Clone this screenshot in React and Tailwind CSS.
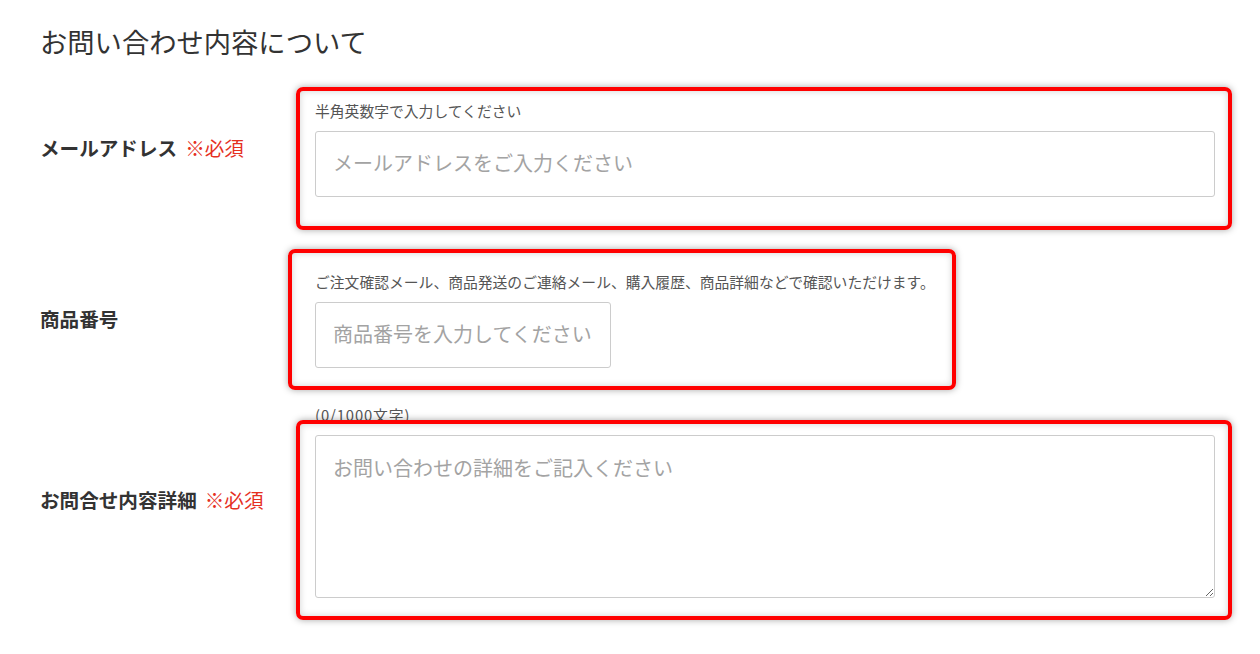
import React from 'react';

const jp = { fontFamily: '"Noto Sans CJK JP", "Noto Sans", sans-serif' };

const Highlight = ({ className }) => (
  <div
    className={`pointer-events-none absolute rounded-[7px] border-4 border-[#ff0000] shadow-[0_0_7px_rgba(0,0,0,0.35),inset_0_0_7px_rgba(0,0,0,0.18)] ${className}`}
  />
);

const Label = ({ text, required }) => (
  <div className="w-[275px] shrink-0 text-[19.6px] leading-[28px] text-[#333]">
    <span className="font-bold">{text}</span>
    {required && <span className="ml-[8px] text-[#e5301f]">※必須</span>}
  </div>
);

export default function App() {
  return (
    <div className="min-h-[654px] bg-white pl-[40px] pt-[23px]" style={jp}>
      <h1 className="text-[27.3px] font-normal leading-[36px] text-[#333]">お問い合わせ内容について</h1>

      {/* Email */}
      <div className="mt-[42px] flex items-center">
        <div className="-mt-[3px]"><Label text="メールアドレス" required /></div>
        <div className="relative w-[900px]">
          <p className="mb-[10px] text-[14.8px] leading-[20px] text-[#555]">半角英数字で入力してください</p>
          <input
            type="text"
            placeholder="メールアドレスをご入力ください"
            className="block h-[66px] w-full rounded-[3px] border border-[#ccc] bg-white px-[17px] pb-[3px] text-[20px] text-[#333] outline-none placeholder:text-[#a3a3a3]"
          />
          <Highlight className="-left-[19px] -top-[14px] h-[143px] w-[936px]" />
        </div>
      </div>

      {/* Product number */}
      <div className="mt-[75px] flex items-center">
        <div className="-mt-[2px]"><Label text="商品番号" /></div>
        <div className="relative w-[900px]">
          <p className="mb-[10px] text-[14.8px] leading-[20px] text-[#555]">
            ご注文確認メール、商品発送のご連絡メール、購入履歴、商品詳細などで確認いただけます。
          </p>
          <input
            type="text"
            placeholder="商品番号を入力してください"
            className="block h-[66px] w-[296px] rounded-[3px] border border-[#ccc] bg-white px-[17px] pb-[3px] text-[20px] text-[#333] outline-none placeholder:text-[#a3a3a3]"
          />
          <Highlight className="-left-[27px] -top-[23px] h-[141px] w-[668px]" />
        </div>
      </div>

      {/* Details */}
      <div className="mt-[37px] flex items-center">
        <div className="-mt-[3px]"><Label text="お問合せ内容詳細" required /></div>
        <div className="relative w-[900px]">
          <p className="mb-[10px] text-[14.8px] leading-[20px] tracking-[0.06em] text-[#555]">(0/1000文字)</p>
          <textarea
            placeholder="お問い合わせの詳細をご記入ください"
            className="block h-[163px] w-full rounded-[3px] border border-[#ccc] bg-white px-[17px] py-[17px] text-[20px] leading-[30px] text-[#333] outline-none placeholder:text-[#a3a3a3]"
          />
          <Highlight className="-left-[19px] top-[15px] h-[200px] w-[936px]" />
        </div>
      </div>
    </div>
  );
}
